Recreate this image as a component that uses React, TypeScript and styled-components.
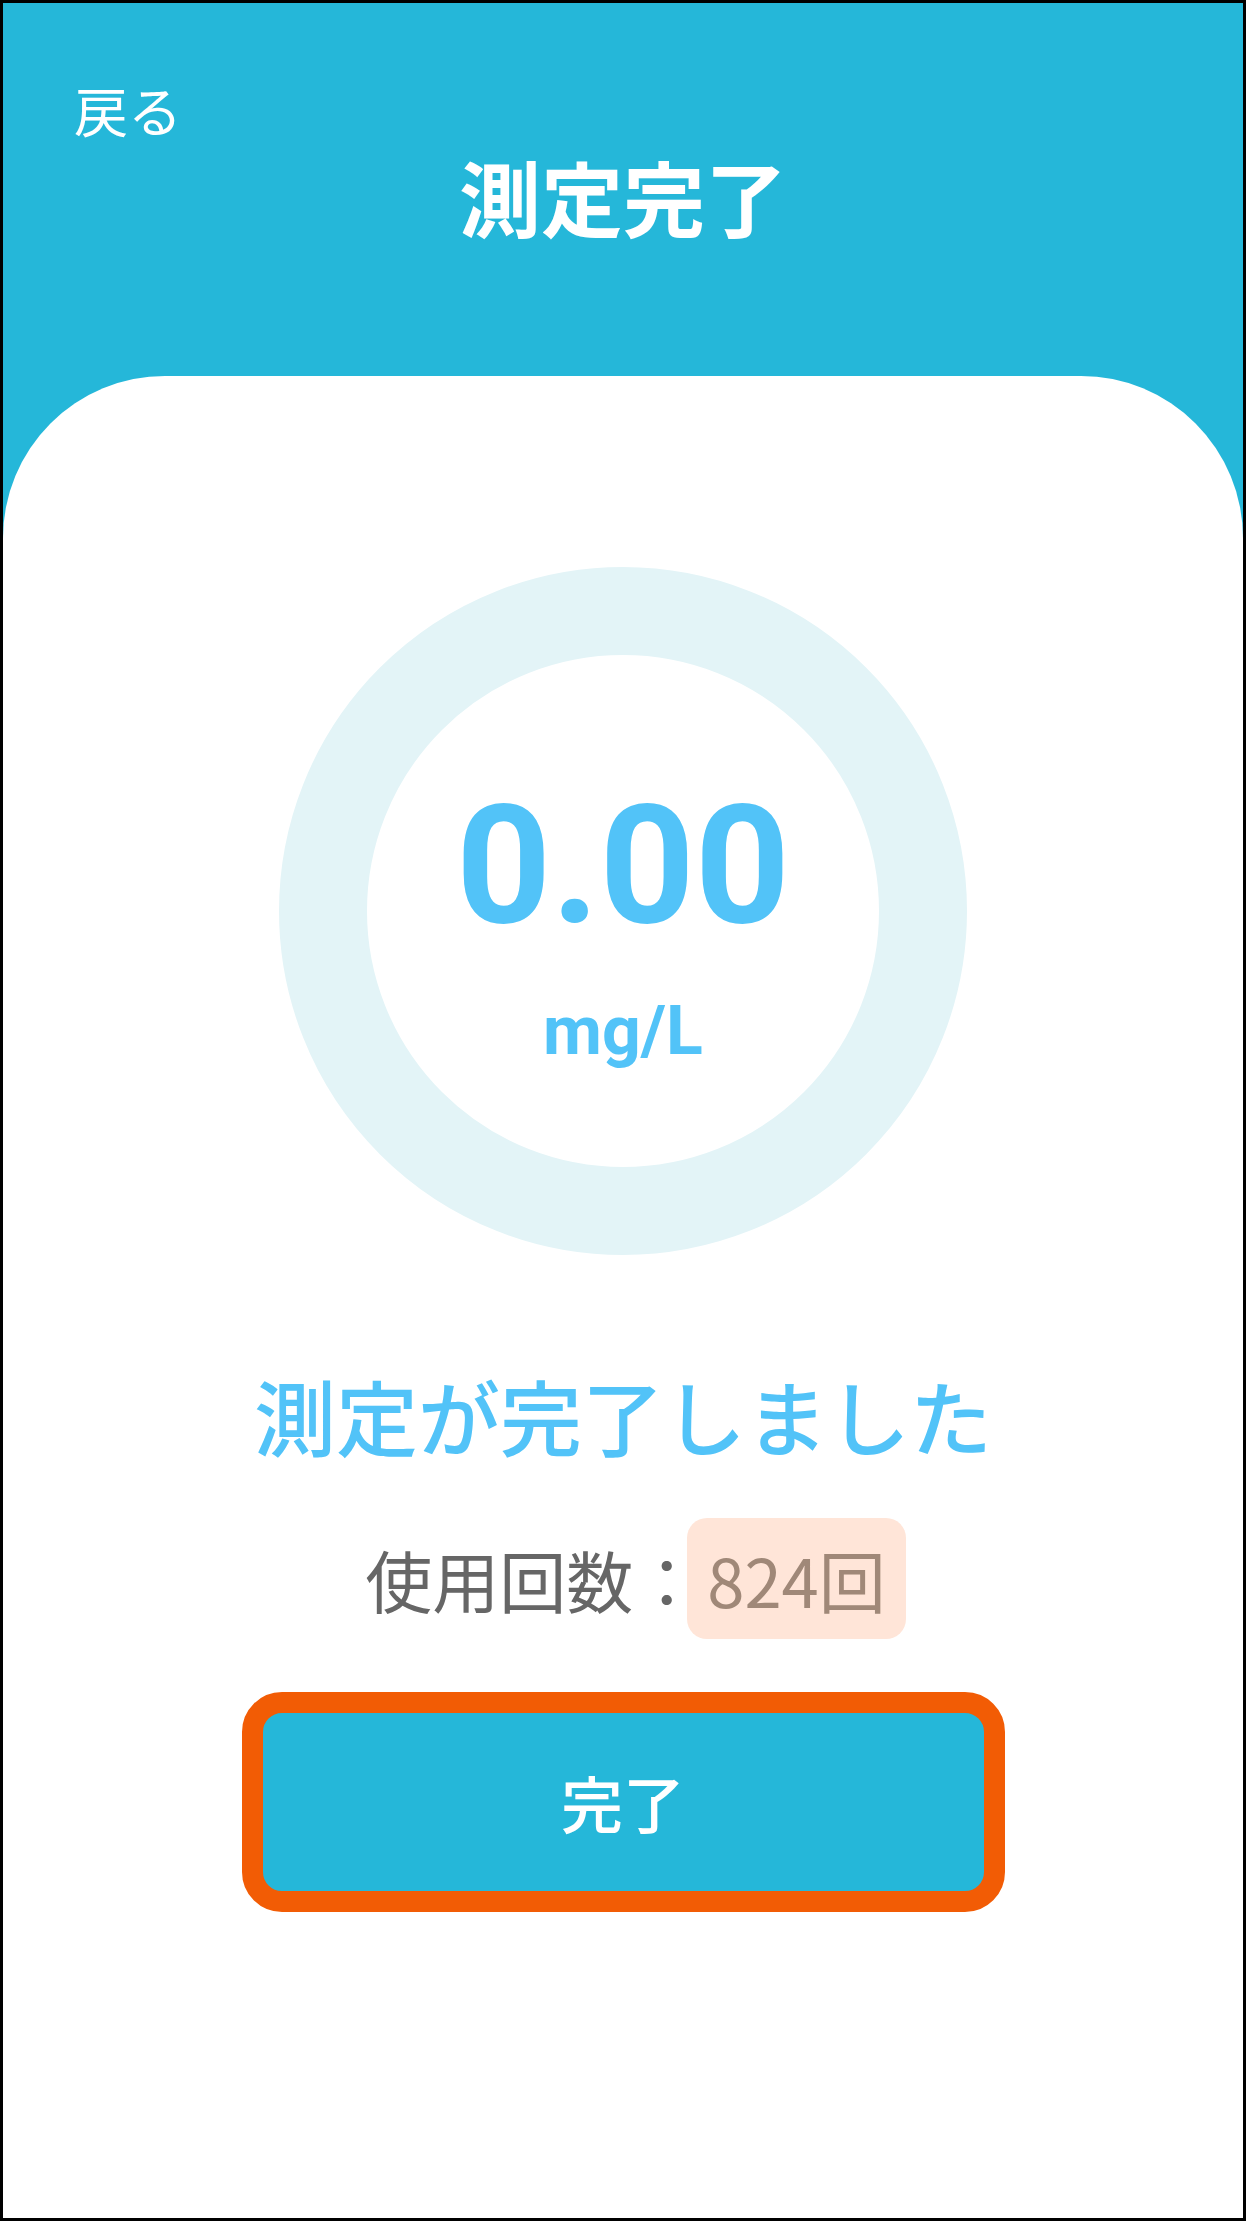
import React from "react";
import styled, { createGlobalStyle } from "styled-components";

const GlobalStyle = createGlobalStyle`
  html, body {
    margin: 0;
    padding: 0;
    background: #ffffff;
  }
  body {
    font-family: "Noto Sans CJK JP", "Noto Sans", sans-serif;
  }
`;

const JP = `"Noto Sans CJK JP", "Noto Sans", sans-serif`;

const MeasureDone: React.FC = () => {
  return (
    <Frame>
      <GlobalStyle />
      <Header>
        <BackLink>戻る</BackLink>
        <Title>測定完了</Title>
      </Header>
      <Card>
        <Ring>
          <Value>0.00</Value>
          <Unit>mg/L</Unit>
        </Ring>
        <Message>測定が完了しました</Message>
        <CountRow>
          <CountLabel>使用回数：</CountLabel>
          <CountBadge>824回</CountBadge>
        </CountRow>
        <DoneButton type="button">完了</DoneButton>
      </Card>
    </Frame>
  );
};

const Frame = styled.div`
  box-sizing: border-box;
  width: 1246px;
  height: 2221px;
  border: 3px solid #000000;
  background: #25b7d9;
  display: flex;
  flex-direction: column;
  overflow: hidden;
`;

const Header = styled.header`
  height: 373px;
  flex-shrink: 0;
  display: flex;
  flex-direction: column;
  padding: 80px 0 0 71px;
  box-sizing: border-box;
`;

const BackLink = styled.div`
  font-family: ${JP};
  font-size: 54px;
  font-weight: 400;
  line-height: 1;
  color: #ffffff;
  align-self: flex-start;
`;

const Title = styled.h1`
  margin: 18px 0 0 -71px;
  font-family: ${JP};
  font-size: 82px;
  font-weight: 700;
  line-height: 1;
  color: #ffffff;
  text-align: center;
`;

const Card = styled.main`
  flex: 1;
  background: #ffffff;
  border-radius: 162px 162px 0 0;
  display: flex;
  flex-direction: column;
  align-items: center;
  padding-top: 191px;
`;

const Ring = styled.div`
  box-sizing: border-box;
  width: 688px;
  height: 688px;
  border-radius: 50%;
  border: 88px solid #e3f4f7;
  display: flex;
  flex-direction: column;
  align-items: center;
  justify-content: center;
  padding-top: 25px;
`;

const Value = styled.div`
  font-family: Roboto, "Liberation Sans", sans-serif;
  font-size: 166px;
  font-weight: 700;
  line-height: 1;
  color: #52c3f8;
`;

const Unit = styled.div`
  margin-top: 48px;
  font-family: Roboto, "Liberation Sans", sans-serif;
  font-size: 68px;
  font-weight: 700;
  line-height: 1;
  color: #52c3f8;
`;

const Message = styled.div`
  margin-top: 119px;
  font-family: ${JP};
  font-size: 82px;
  font-weight: 500;
  line-height: 1;
  color: #52c3f8;
`;

const CountRow = styled.div`
  margin-top: 62px;
  display: flex;
  align-items: center;
  padding-left: 25px;
`;

const CountLabel = styled.span`
  font-family: ${JP};
  font-size: 67px;
  font-weight: 400;
  line-height: 1;
  color: #666666;
`;

const CountBadge = styled.span`
  margin-left: -13px;
  padding: 27px 20px;
  border-radius: 20px;
  background: #ffe5d8;
  font-family: ${JP};
  font-size: 67px;
  font-weight: 400;
  line-height: 1;
  color: #a08878;
`;

const DoneButton = styled.button`
  margin-top: 53px;
  box-sizing: border-box;
  width: 763px;
  height: 220px;
  border: 21px solid #f25c05;
  border-radius: 40px;
  background: #25b7d9;
  font-family: ${JP};
  font-size: 62px;
  font-weight: 500;
  line-height: 1;
  color: #ffffff;
  cursor: pointer;
  padding: 0;
`;

export default MeasureDone;
